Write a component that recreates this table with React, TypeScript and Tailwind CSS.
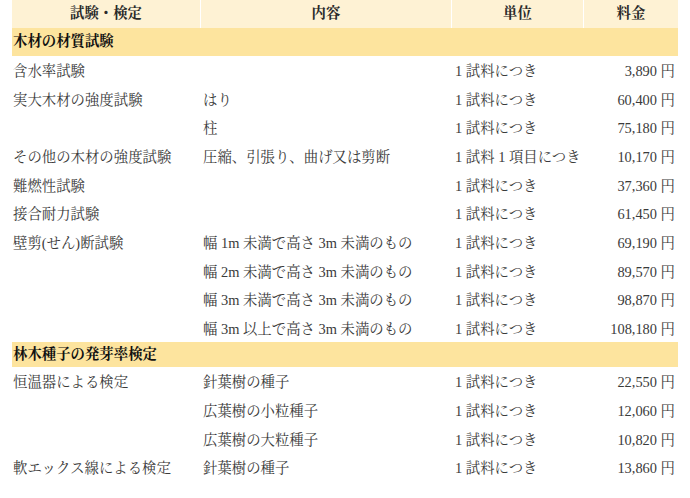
import React from "react";

type Row =
  | { kind: "section"; title: string; h: string }
  | { kind: "data"; a: string; b: string; c: string; d: string };

const rows: Row[] = [
  { kind: "section", title: "木材の材質試験", h: "h-[28px]" },
  { kind: "data", a: "含水率試験", b: "", c: "1 試料につき", d: "3,890 円" },
  { kind: "data", a: "実大木材の強度試験", b: "はり", c: "1 試料につき", d: "60,400 円" },
  { kind: "data", a: "", b: "柱", c: "1 試料につき", d: "75,180 円" },
  { kind: "data", a: "その他の木材の強度試験", b: "圧縮、引張り、曲げ又は剪断", c: "1 試料 1 項目につき", d: "10,170 円" },
  { kind: "data", a: "難燃性試験", b: "", c: "1 試料につき", d: "37,360 円" },
  { kind: "data", a: "接合耐力試験", b: "", c: "1 試料につき", d: "61,450 円" },
  { kind: "data", a: "壁剪(せん)断試験", b: "幅 1m 未満で高さ 3m 未満のもの", c: "1 試料につき", d: "69,190 円" },
  { kind: "data", a: "", b: "幅 2m 未満で高さ 3m 未満のもの", c: "1 試料につき", d: "89,570 円" },
  { kind: "data", a: "", b: "幅 3m 未満で高さ 3m 未満のもの", c: "1 試料につき", d: "98,870 円" },
  { kind: "data", a: "", b: "幅 3m 以上で高さ 3m 未満のもの", c: "1 試料につき", d: "108,180 円" },
  { kind: "section", title: "林木種子の発芽率検定", h: "h-[25px]" },
  { kind: "data", a: "恒温器による検定", b: "針葉樹の種子", c: "1 試料につき", d: "22,550 円" },
  { kind: "data", a: "", b: "広葉樹の小粒種子", c: "1 試料につき", d: "12,060 円" },
  { kind: "data", a: "", b: "広葉樹の大粒種子", c: "1 試料につき", d: "10,820 円" },
  { kind: "data", a: "軟エックス線による検定", b: "針葉樹の種子", c: "1 試料につき", d: "13,860 円" },
];

export default function App() {
  return (
    <div
      className="w-[690px] h-[498px] bg-white pl-[12px] pr-[12px] overflow-hidden text-[14.4px] text-[#3a3a3a]"
      style={{ fontFamily: '"Liberation Serif", "Noto Serif CJK JP", "Noto Sans CJK JP", serif' }}
    >
      <div className="w-[666px]">
        <div className="grid grid-cols-[189px_251px_132px_94px] h-[28px] bg-[#fef2d4] font-bold text-[#2a2a2a]">
          <div className="flex items-center justify-center border-r border-white">試験・検定</div>
          <div className="flex items-center justify-center border-r border-white">内容</div>
          <div className="flex items-center justify-center border-r border-white">単位</div>
          <div className="flex items-center justify-center">料金</div>
        </div>
        {rows.map((r, i) =>
          r.kind === "section" ? (
            <div
              key={i}
              className={`${r.h} flex items-center bg-[#fde49e] font-bold text-[#111] pl-[1px]`}
            >
              {r.title}
            </div>
          ) : (
            <div key={i} className="grid grid-cols-[189px_251px_132px_94px] h-[28.65px] items-center pt-[3px]">
              <div className="pl-[1px] whitespace-nowrap">{r.a}</div>
              <div className="pl-[2px] whitespace-nowrap">{r.b}</div>
              <div className="pl-[3px] whitespace-nowrap">{r.c}</div>
              <div className="pr-[3px] text-right whitespace-nowrap">{r.d}</div>
            </div>
          )
        )}
      </div>
    </div>
  );
}
